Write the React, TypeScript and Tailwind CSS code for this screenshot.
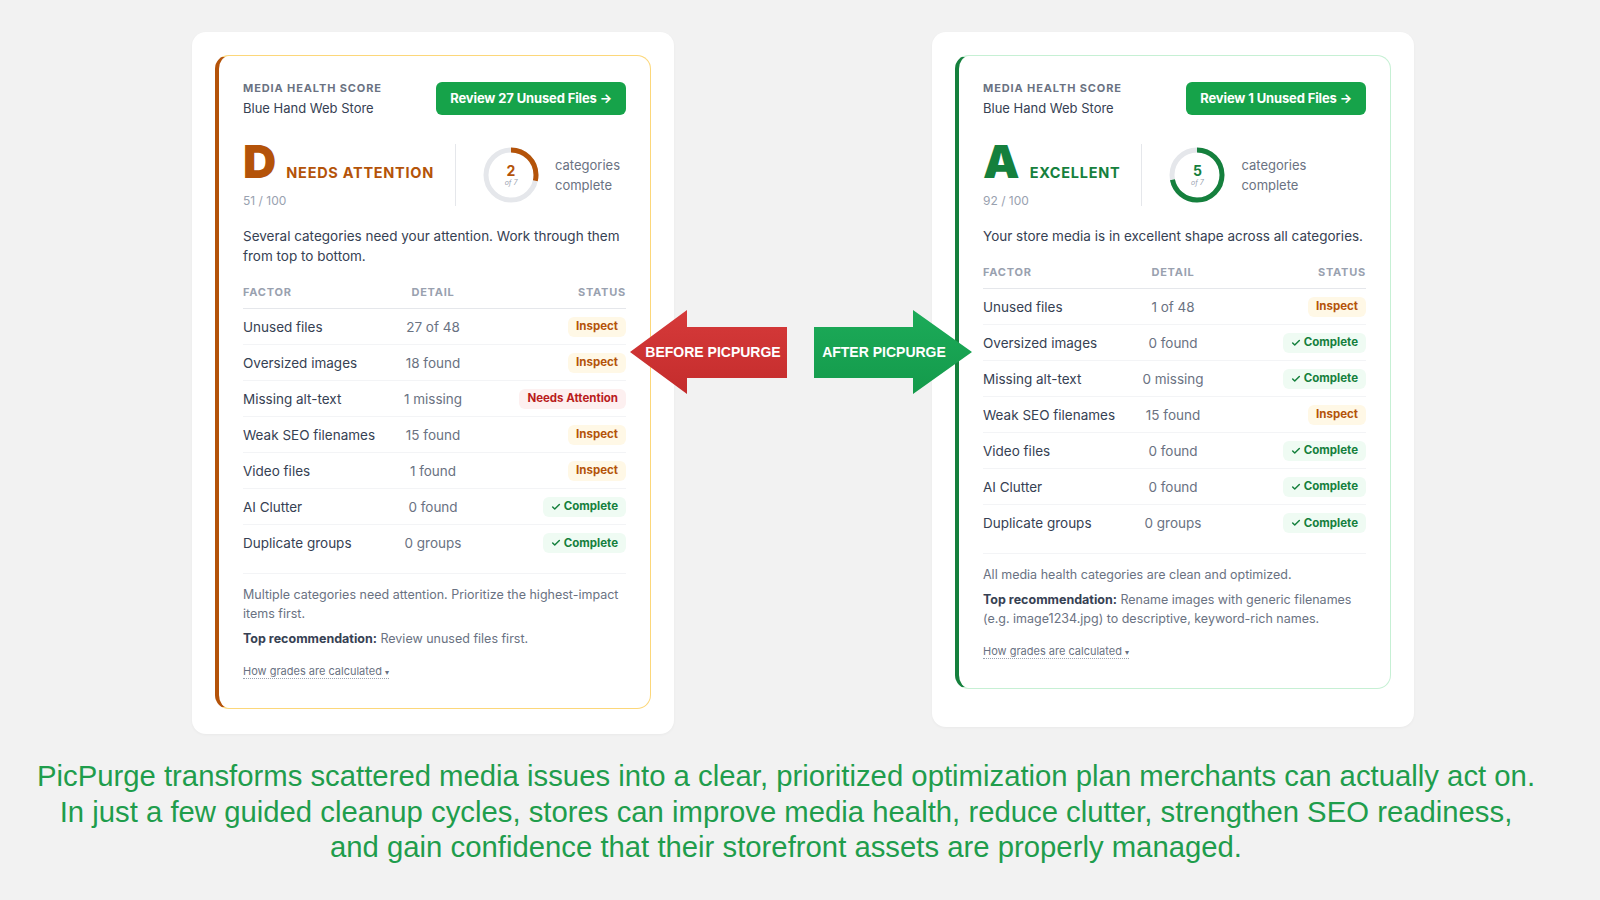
import { Check } from "lucide-react";

type Status = "inspect" | "attention" | "complete";

type Row = { factor: string; detail: string; status: Status };

type Report = {
  tone: "warn" | "good";
  button: string;
  grade: string;
  label: string;
  score: string;
  done: number;
  summary: string;
  rows: Row[];
  note: string;
  recommendation: string;
};

const before: Report = {
  tone: "warn",
  button: "Review 27 Unused Files →",
  grade: "D",
  label: "NEEDS ATTENTION",
  score: "51 / 100",
  done: 2,
  summary:
    "Several categories need your attention. Work through them from top to bottom.",
  rows: [
    { factor: "Unused files", detail: "27 of 48", status: "inspect" },
    { factor: "Oversized images", detail: "18 found", status: "inspect" },
    { factor: "Missing alt-text", detail: "1 missing", status: "attention" },
    { factor: "Weak SEO filenames", detail: "15 found", status: "inspect" },
    { factor: "Video files", detail: "1 found", status: "inspect" },
    { factor: "AI Clutter", detail: "0 found", status: "complete" },
    { factor: "Duplicate groups", detail: "0 groups", status: "complete" },
  ],
  note: "Multiple categories need attention. Prioritize the highest-impact items first.",
  recommendation: "Review unused files first.",
};

const after: Report = {
  tone: "good",
  button: "Review 1 Unused Files →",
  grade: "A",
  label: "EXCELLENT",
  score: "92 / 100",
  done: 5,
  summary: "Your store media is in excellent shape across all categories.",
  rows: [
    { factor: "Unused files", detail: "1 of 48", status: "inspect" },
    { factor: "Oversized images", detail: "0 found", status: "complete" },
    { factor: "Missing alt-text", detail: "0 missing", status: "complete" },
    { factor: "Weak SEO filenames", detail: "15 found", status: "inspect" },
    { factor: "Video files", detail: "0 found", status: "complete" },
    { factor: "AI Clutter", detail: "0 found", status: "complete" },
    { factor: "Duplicate groups", detail: "0 groups", status: "complete" },
  ],
  note: "All media health categories are clean and optimized.",
  recommendation:
    "Rename images with generic filenames (e.g. image1234.jpg) to descriptive, keyword-rich names.",
};

function Badge({ status }: { status: Status }) {
  if (status === "inspect") {
    return (
      <span className="inline-flex h-[20px] items-center rounded-md bg-[#fff8e6] px-2 text-[11.5px] font-bold text-[#b45309]">
        Inspect
      </span>
    );
  }
  if (status === "attention") {
    return (
      <span className="inline-flex h-[20px] items-center rounded-md bg-[#fdf0f0] px-2 text-[11.5px] font-bold text-[#b91c1c]">
        Needs Attention
      </span>
    );
  }
  return (
    <span className="inline-flex h-[20px] items-center gap-[3px] rounded-md bg-[#effbf3] px-2 text-[11.5px] font-bold text-[#15803d]">
      <Check size={10} strokeWidth={3.5} />
      Complete
    </span>
  );
}

function Ring({ done, color }: { done: number; color: string }) {
  const r = 25;
  const c = 2 * Math.PI * r;
  const arc = (done / 7) * c;
  return (
    <div className="relative h-[56px] w-[56px] shrink-0">
      <svg width="56" height="56" viewBox="0 0 56 56" className="-rotate-90">
        <circle cx="28" cy="28" r={r} fill="none" stroke="#e5e7eb" strokeWidth="5" />
        <circle
          cx="28"
          cy="28"
          r={r}
          fill="none"
          stroke={color}
          strokeWidth="5"
          strokeDasharray={`${arc} ${c}`}
        />
      </svg>
      <div className="absolute inset-0 flex flex-col items-center justify-center">
        <span className="text-[14px] font-bold leading-none" style={{ color }}>
          {done}
        </span>
        <span className="mt-[1px] text-[7px] italic leading-none text-gray-400">of 7</span>
      </div>
    </div>
  );
}

function HealthCard({ data }: { data: Report }) {
  const warn = data.tone === "warn";
  const accent = warn ? "#b45309" : "#15803d";

  return (
    <div
      className={
        warn
          ? "w-[482px] rounded-[14px] bg-white p-[23px] pb-[25px] shadow-[0_1px_3px_rgba(0,0,0,0.04)]"
          : "w-[482px] rounded-[14px] bg-white p-[23px] pb-[38px] shadow-[0_1px_3px_rgba(0,0,0,0.04)]"
      }
    >
      <div
        className={
          warn
            ? "rounded-[14px] border border-l-4 border-[#fcd77a] border-l-[#b45309] px-[24px] pb-[28px] pt-[26px]"
            : "rounded-[14px] border border-l-4 border-[#c6f0d4] border-l-[#15803d] px-[24px] pb-[28px] pt-[26px]"
        }
      >
        <div className="flex items-start justify-between">
          <div className="-mt-[2px]">
            <div className="text-[11px] font-bold leading-[16px] tracking-[0.08em] text-gray-500">
              MEDIA HEALTH SCORE
            </div>
            <div className="mt-[3px] text-[13px] leading-[18px] text-gray-700">
              Blue Hand Web Store
            </div>
          </div>
          <button className="h-[33px] rounded-md bg-[#16a34a] px-[14px] text-[13px] font-bold tracking-[-0.01em] text-white">
            {data.button}
          </button>
        </div>

        <div className="mt-[25px] flex items-center">
          <div className="shrink-0">
            <div className="flex items-baseline gap-[11px] whitespace-nowrap">
              <span
                className="text-[46px] font-black leading-[38px] tracking-[-0.02em]"
                style={{ color: accent }}
              >
                {data.grade}
              </span>
              <span
                className="text-[14.5px] font-bold tracking-[0.05em]"
                style={{ color: accent }}
              >
                {data.label}
              </span>
            </div>
            <div className="mt-[9px] text-[12px] leading-[16px] text-gray-400">{data.score}</div>
          </div>
          <div className="ml-[21px] mr-[24px] h-[62px] w-px shrink-0 bg-gray-200" />
          <div className="flex items-center gap-[16px] pl-[3px]">
            <Ring done={data.done} color={accent} />
            <div className="whitespace-nowrap text-[13px] leading-[20px] text-gray-500">
              categories
              <br />
              complete
            </div>
          </div>
        </div>

        <p className="mt-[17px] text-[13.5px] leading-[20px] text-gray-700">{data.summary}</p>

        <div className="mt-[18px] grid grid-cols-[154px_72px_1fr] border-b border-gray-200 pb-[8px] text-[11px] font-bold tracking-[0.07em] text-gray-400">
          <span>FACTOR</span>
          <span className="text-center">DETAIL</span>
          <span className="text-right">STATUS</span>
        </div>

        <div>
          {data.rows.map((row, i) => (
            <div
              key={row.factor}
              className={
                i < data.rows.length - 1
                  ? "grid h-[36px] grid-cols-[154px_72px_1fr] items-center border-b border-gray-100"
                  : "grid h-[36px] grid-cols-[154px_72px_1fr] items-center"
              }
            >
              <span className="text-[13.5px] text-gray-700">{row.factor}</span>
              <span className="whitespace-nowrap text-center text-[13.5px] text-gray-500">
                {row.detail}
              </span>
              <span className="flex justify-end">
                <Badge status={row.status} />
              </span>
            </div>
          ))}
        </div>

        <div className="mt-[12px] border-t border-gray-100 pt-[11px] text-[12.5px] leading-[19px] text-gray-500">
          <p>{data.note}</p>
          <p className="mt-[6px]">
            <b className="font-bold text-gray-700">Top recommendation:</b> {data.recommendation}
          </p>
          <div className="mt-[13px]">
            <span className="border-b border-dotted border-gray-400 text-[11px] leading-[15px] text-gray-500">
              How grades are calculated <span className="text-[8px]">▾</span>
            </span>
          </div>
        </div>
      </div>
    </div>
  );
}

function ArrowLabel({
  dir,
  color,
  shade,
  text,
  className,
}: {
  dir: "left" | "right";
  color: string;
  shade: string;
  text: string;
  className: string;
}) {
  const points =
    dir === "left"
      ? "0,42 57,0 57,17 157,17 157,68 57,68 57,84 0,42"
      : "0,17 99,17 99,0 158,42 99,84 99,68 0,68";
  const id = `grad-${dir}`;
  return (
    <div className={className}>
      <svg width="158" height="84" viewBox="0 0 158 84">
        <defs>
          <linearGradient id={id} x1="0" y1="0" x2="0" y2="1">
            <stop offset="0" stopColor={color} />
            <stop offset="1" stopColor={shade} />
          </linearGradient>
        </defs>
        <polygon points={points} fill={`url(#${id})`} />
        <text
          x={dir === "left" ? 83 : 70}
          y="47"
          textAnchor="middle"
          fill="#ffffff"
          fontFamily="'Liberation Sans', Arial, sans-serif"
          fontWeight="700"
          fontSize="14"
        >
          {text}
        </text>
      </svg>
    </div>
  );
}

export default function App() {
  return (
    <div className="relative h-[900px] w-[1600px] overflow-hidden bg-[#f2f2f2] font-['Inter',sans-serif]">
      <div className="flex items-start gap-[258px] pl-[192px] pt-[32px]">
        <HealthCard data={before} />
        <HealthCard data={after} />
      </div>

      <ArrowLabel
        dir="left"
        color="#d63a3a"
        shade="#c42c2c"
        text="BEFORE PICPURGE"
        className="absolute left-[630px] top-[310px]"
      />
      <ArrowLabel
        dir="right"
        color="#1cab59"
        shade="#149a4b"
        text="AFTER PICPURGE"
        className="absolute left-[814px] top-[310px]"
      />

      <p className="mt-[24px] whitespace-nowrap pr-[28px] text-center font-['Liberation_Sans',Arial,sans-serif] text-[29.3px] leading-[35.5px] text-[#1f9d4c]">
        PicPurge transforms scattered media issues into a clear, prioritized optimization plan
        merchants can actually act on.
        <br />
        In just a few guided cleanup cycles, stores can improve media health, reduce clutter,
        strengthen SEO readiness,
        <br />
        and gain confidence that their storefront assets are properly managed.
      </p>
    </div>
  );
}
